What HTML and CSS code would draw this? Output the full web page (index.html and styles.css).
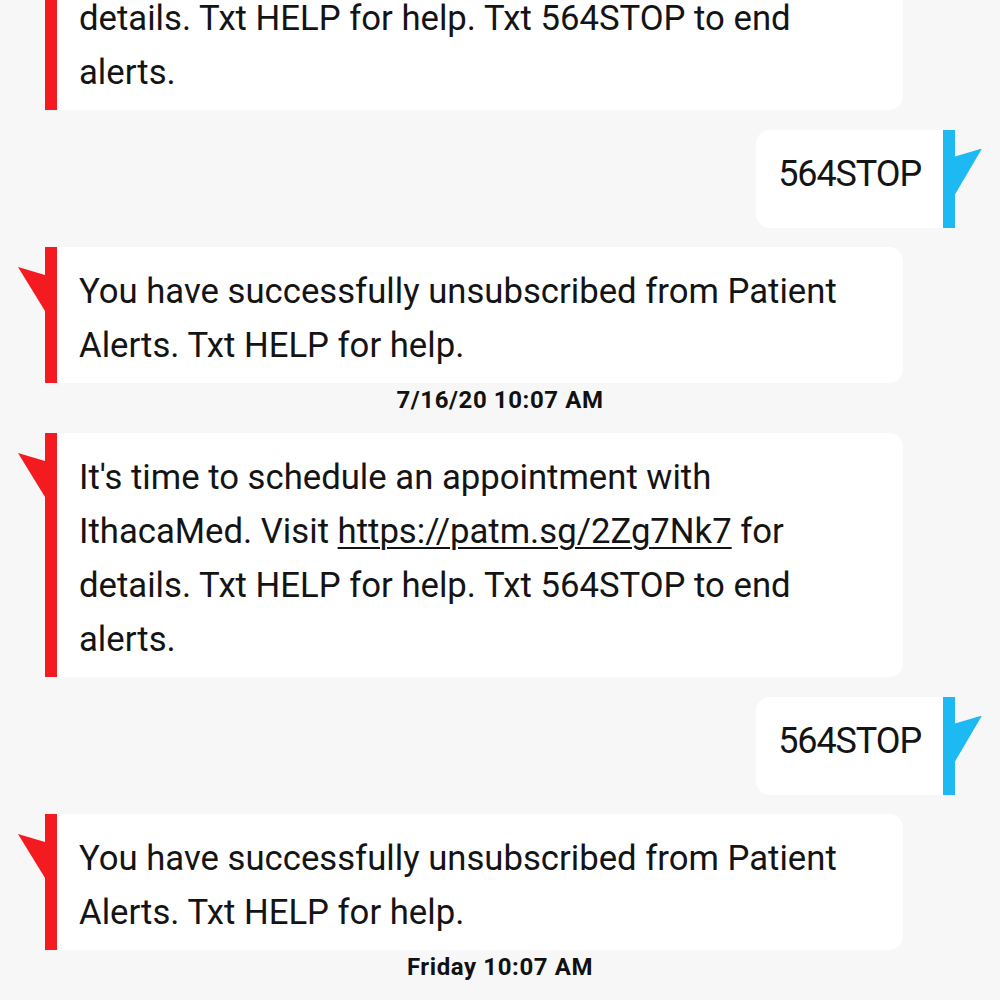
FILE: index.html
```html
<!DOCTYPE html>
<html>
<head>
<meta charset="utf-8">
<link rel="stylesheet" href="styles.css">
</head>
<body>
<div class="thread">
  <div class="msg in">
    <div class="bubble">It's time to schedule an appointment with IthacaMed. Visit <span class="link">https://patm.sg/2Zg7Nk7</span> for details. Txt HELP for help. Txt 564STOP to end alerts.</div>
  </div>
  <div class="msg out">
    <div class="bubble">564STOP</div>
  </div>
  <div class="msg in">
    <div class="bubble">You have successfully unsubscribed from Patient Alerts. Txt HELP for help.</div>
  </div>
  <div class="ts">7/16/20 10:07 AM</div>
  <div class="msg in">
    <div class="bubble">It's time to schedule an appointment with IthacaMed. Visit <span class="link">https://patm.sg/2Zg7Nk7</span> for details. Txt HELP for help. Txt 564STOP to end alerts.</div>
  </div>
  <div class="msg out">
    <div class="bubble">564STOP</div>
  </div>
  <div class="msg in">
    <div class="bubble">You have successfully unsubscribed from Patient Alerts. Txt HELP for help.</div>
  </div>
  <div class="ts">Friday 10:07 AM</div>
  <div class="msg in">
    <div class="bubble">It's time to schedule an appointment with IthacaMed.</div>
  </div>
</div>
</body>
</html>
```

FILE: styles.css
```css
html, body {
  margin: 0;
  padding: 0;
  background: #f7f7f7;
  height: 1000px;
  overflow: hidden;
}

.thread {
  display: flex;
  flex-direction: column;
  margin-top: -134px;
  font-family: Roboto, "Noto Sans", sans-serif;
  color: #141414;
}

.msg {
  position: relative;
  display: flex;
  margin-top: 19.5px;
}

.msg:first-child {
  margin-top: 0;
}

.bubble {
  background: #ffffff;
  font-size: 34.7px;
  line-height: 54px;
  padding: 17px 40px 11px 22px;
}

.msg.in {
  margin-left: 45px;
  width: 858px;
}

.msg.in .bubble {
  flex: 1;
  border-left: 12px solid #f41b20;
  border-radius: 0 14px 14px 0;
}

.msg.in::before {
  content: "";
  position: absolute;
  left: -27px;
  top: 20px;
  width: 27px;
  height: 44px;
  background: #f41b20;
  clip-path: polygon(0 0, 100% 8px, 100% 100%);
}

.msg.out {
  align-self: flex-end;
  margin-right: 45px;
}

.msg.out .bubble {
  font-size: 36px;
  letter-spacing: -1.1px;
  padding: 17px 22px 27px 22px;
  border-right: 12px solid #1cb9f3;
  border-radius: 14px 0 0 14px;
}

.msg.out::after {
  content: "";
  position: absolute;
  right: -27px;
  top: 19px;
  width: 27px;
  height: 46px;
  background: #1cb9f3;
  clip-path: polygon(100% 0, 0 8px, 0 100%);
}

.link {
  text-decoration: underline;
  text-underline-offset: 4px;
  text-decoration-thickness: 2px;
}

.ts {
  height: 34px;
  line-height: 34px;
  text-align: center;
  font-size: 24px;
  font-weight: 700;
  letter-spacing: 0.6px;
  color: #111;
}

.ts + .msg {
  margin-top: 16px;
}
```
